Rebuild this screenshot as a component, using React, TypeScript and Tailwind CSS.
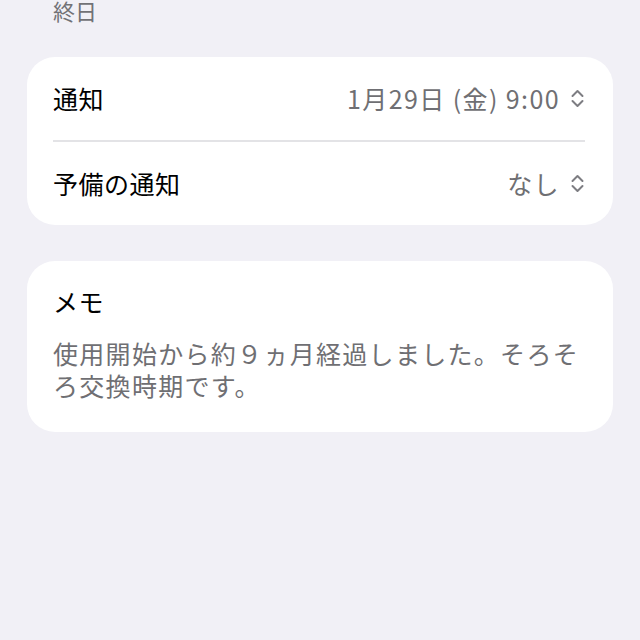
const FONT = 'font-["Noto_Sans_CJK_JP","Noto_Sans",sans-serif]'

function UpDownIcon() {
    return (
        <svg width="15" height="21" viewBox="0 0 15 21" fill="none" stroke="#7d7d82" strokeWidth="2" strokeLinecap="round" strokeLinejoin="round">
            <path d="M2.5 8 L7.5 3 L12.5 8" />
            <path d="M2.5 13 L7.5 18 L12.5 13" />
        </svg>
    )
}

function SelectRow({ label, value }: { label: string; value: string }) {
    return (
        <div className="flex h-[83px] items-center justify-between">
            <span className="text-[25px] tracking-[0.5px] text-black">{label}</span>
            <span className="flex items-center gap-[10px] text-[25px] tracking-[1.4px] text-[#6f6f73]">
                {value}
                <UpDownIcon />
            </span>
        </div>
    )
}

export default function App() {
    return (
        <div className={`min-h-[640px] w-[640px] overflow-hidden bg-[#f1f0f6] px-[27px] ${FONT}`}>
            {/* All-day label, cut off at the top */}
            <div className="h-[57px] pl-[26px] text-[22px] leading-[20px] text-[#727276]">終日</div>

            {/* Notification card */}
            <div className="rounded-[28px] bg-white pl-[26px] pr-[28px]">
                <SelectRow label="通知" value="1月29日 (金) 9:00" />
                <div className="h-[2px] bg-[#e3e3e6]" />
                <SelectRow label="予備の通知" value="なし" />
            </div>

            {/* Memo card */}
            <div className="mt-[36px] rounded-[28px] bg-white px-[26px] pb-[31px] pt-[24px]">
                <div className="text-[25px] leading-[32px] tracking-[0.5px] text-black">メモ</div>
                <p className="mt-[20px] text-[25px] leading-[32px] tracking-[1.3px] text-[#6f6f73]">
                    使用開始から約９ヵ月経過しました。そろそ
                    <br />
                    ろ交換時期です。
                </p>
            </div>
        </div>
    )
}
